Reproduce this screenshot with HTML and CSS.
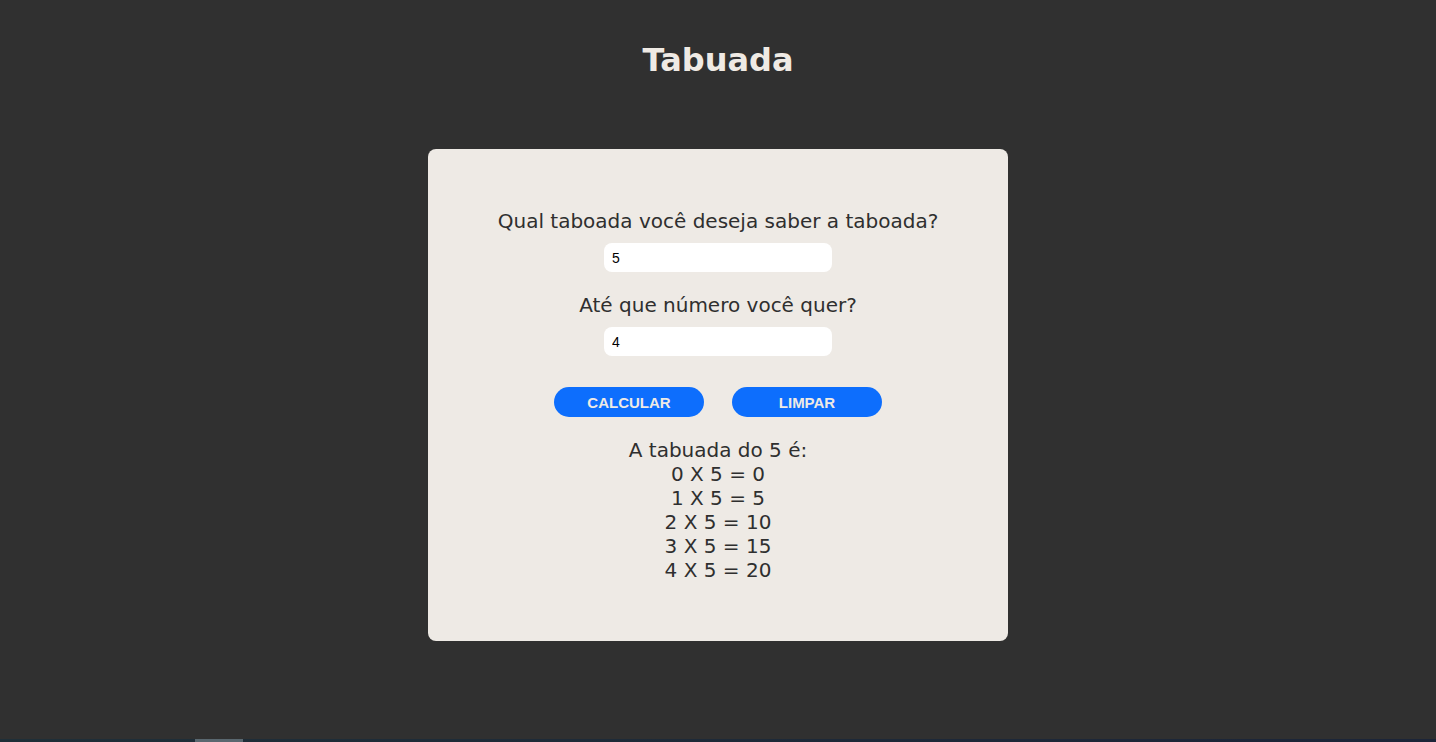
FILE: index.html
```html
<!DOCTYPE html>
<html lang="pt-BR">
<head>
<meta charset="utf-8">
<title>Tabuada</title>
<link rel="stylesheet" href="styles.css">
</head>
<body>
<main class="page">
  <h1 class="title">Tabuada</h1>
  <section class="card">
    <label class="label" for="num">Qual taboada você deseja saber a taboada?</label>
    <input class="field" id="num" type="text" value="5">
    <label class="label label-second" for="ate">Até que número você quer?</label>
    <input class="field" id="ate" type="text" value="4">
    <div class="actions">
      <button class="btn" type="button">CALCULAR</button>
      <button class="btn" type="button">LIMPAR</button>
    </div>
    <div class="result">
      <p>A tabuada do 5 é:</p>
      <p>0 X 5 = 0</p>
      <p>1 X 5 = 5</p>
      <p>2 X 5 = 10</p>
      <p>3 X 5 = 15</p>
      <p>4 X 5 = 20</p>
    </div>
  </section>
</main>
<div class="taskbar"><span class="taskbar-item"></span></div>
</body>
</html>
```
FILE: styles.css
```css
html, body {
  margin: 0;
  padding: 0;
  height: 100%;
}
body {
  background: #303030;
  font-family: "DejaVu Sans", Verdana, sans-serif;
  display: flex;
  flex-direction: column;
}
.page {
  flex: 1;
  display: flex;
  flex-direction: column;
  align-items: center;
}
.title {
  margin: 41px 0 0;
  font-size: 32px;
  line-height: 38px;
  font-weight: bold;
  color: #efeae4;
}
.card {
  margin-top: 70px;
  width: 580px;
  height: 492px;
  box-sizing: border-box;
  background: #eeeae5;
  border-radius: 8px;
  display: flex;
  flex-direction: column;
  align-items: center;
  padding-top: 61px;
  color: #2f2f2f;
}
.label {
  font-size: 20px;
  line-height: 23px;
}
.label-second {
  margin-top: 22px;
}
.field {
  margin-top: 10px;
  width: 228px;
  height: 29px;
  box-sizing: border-box;
  border: none;
  border-radius: 8px;
  background: #fff;
  padding: 0 8px;
  font-family: "Liberation Sans", Arial, sans-serif;
  font-size: 14px;
  color: #000;
  outline: none;
}
.actions {
  margin-top: 31px;
  display: flex;
  gap: 28px;
}
.btn {
  width: 150px;
  height: 30px;
  border: none;
  border-radius: 15px;
  background: #0d6efd;
  color: #eeeae5;
  font-family: "Liberation Sans", Arial, sans-serif;
  font-weight: bold;
  font-size: 15px;
  padding: 0;
}
.result {
  margin-top: 21px;
  font-size: 20px;
  line-height: 24px;
  text-align: center;
}
.result p {
  margin: 0;
}
.taskbar {
  height: 3px;
  background: linear-gradient(90deg, #1f2f38, #1c2538);
  position: relative;
}
.taskbar-item {
  position: absolute;
  left: 195px;
  top: 0;
  width: 48px;
  height: 3px;
  background: #5a6870;
}
```
